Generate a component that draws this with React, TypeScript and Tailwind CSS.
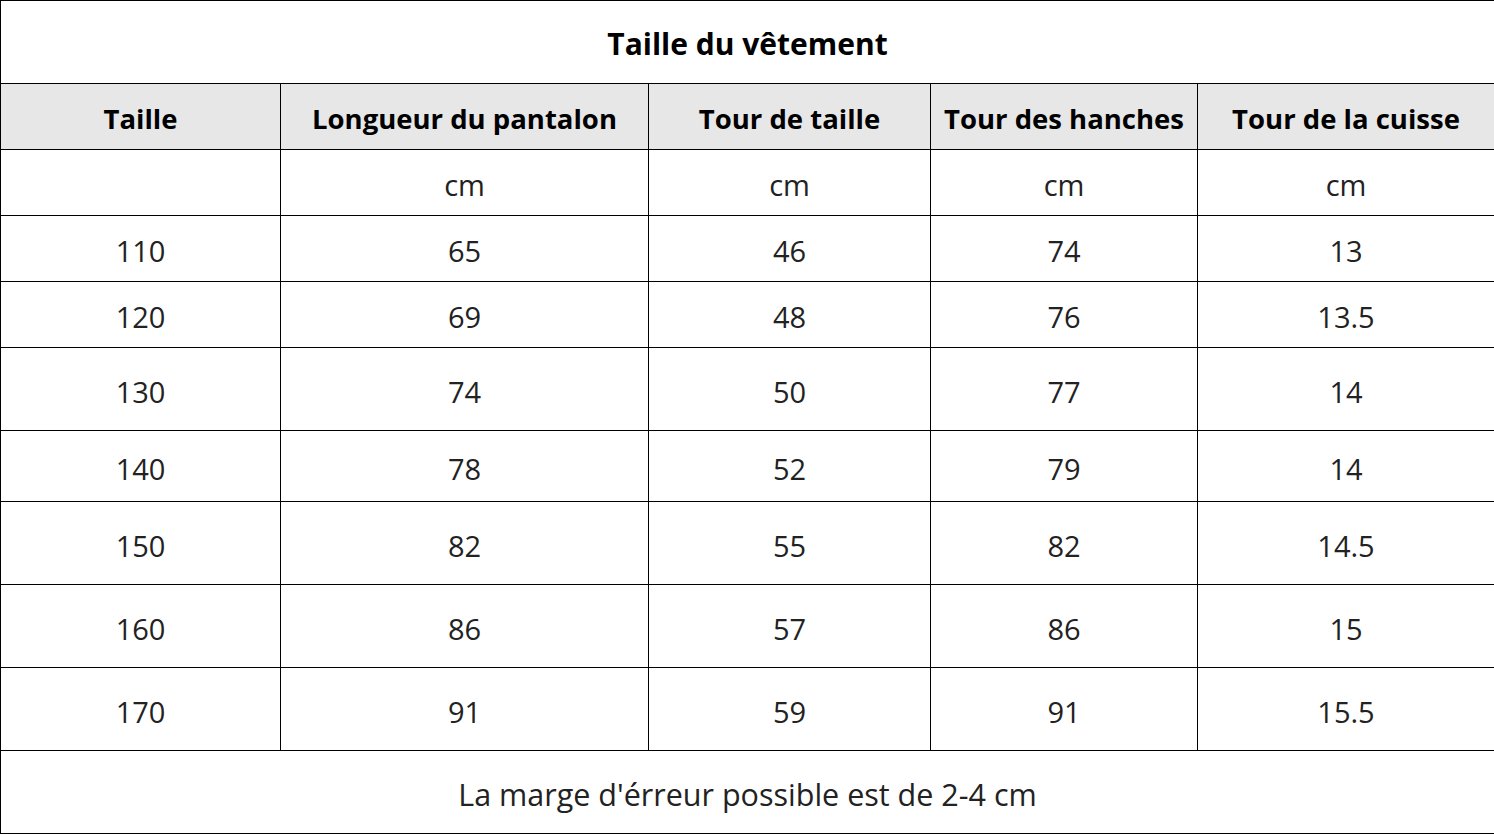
import React from 'react';

const headers = [
  'Taille',
  'Longueur du pantalon',
  'Tour de taille',
  'Tour des hanches',
  'Tour de la cuisse',
];

const rows: { cells: string[]; h: string }[] = [
  { cells: ['110', '65', '46', '74', '13'], h: 'h-[66px]' },
  { cells: ['120', '69', '48', '76', '13.5'], h: 'h-[66px]' },
  { cells: ['130', '74', '50', '77', '14'], h: 'h-[83px]' },
  { cells: ['140', '78', '52', '79', '14'], h: 'h-[71px]' },
  { cells: ['150', '82', '55', '82', '14.5'], h: 'h-[83px]' },
  { cells: ['160', '86', '57', '86', '15'], h: 'h-[83px]' },
  { cells: ['170', '91', '59', '91', '15.5'], h: 'h-[83px]' },
];

const cell = 'border border-black p-0 pt-[4px] text-center align-middle leading-none';

export default function App() {
  return (
    <div className="h-[834px] w-[1494px] bg-white font-['Open_Sans',sans-serif]">
      <table className="w-[1494px] table-fixed border-collapse">
        <colgroup>
          <col className="w-[280px]" />
          <col className="w-[368px]" />
          <col className="w-[282px]" />
          <col className="w-[267px]" />
          <col className="w-[297px]" />
        </colgroup>
        <tbody>
          <tr className="h-[83px]">
            <td colSpan={5} className={`${cell} text-[30px] font-bold text-black`}>
              Taille du vêtement
            </td>
          </tr>
          <tr className="h-[66px] bg-[#e7e7e7]">
            {headers.map((h) => (
              <th key={h} className={`${cell} text-[27.5px] font-bold text-black`}>
                {h}
              </th>
            ))}
          </tr>
          <tr className="h-[66px]">
            <td className={cell}></td>
            {[0, 1, 2, 3].map((i) => (
              <td key={i} className={`${cell} text-[29px] text-[#222]`}>
                cm
              </td>
            ))}
          </tr>
          {rows.map((r) => (
            <tr key={r.cells[0]} className={r.h}>
              {r.cells.map((c, i) => (
                <td key={i} className={`${cell} text-[29px] text-[#222]`}>
                  {c}
                </td>
              ))}
            </tr>
          ))}
          <tr className="h-[83px]">
            <td colSpan={5} className={`${cell} text-[30.5px] text-[#222]`}>
              La marge d'érreur possible est de 2-4 cm
            </td>
          </tr>
        </tbody>
      </table>
    </div>
  );
}
